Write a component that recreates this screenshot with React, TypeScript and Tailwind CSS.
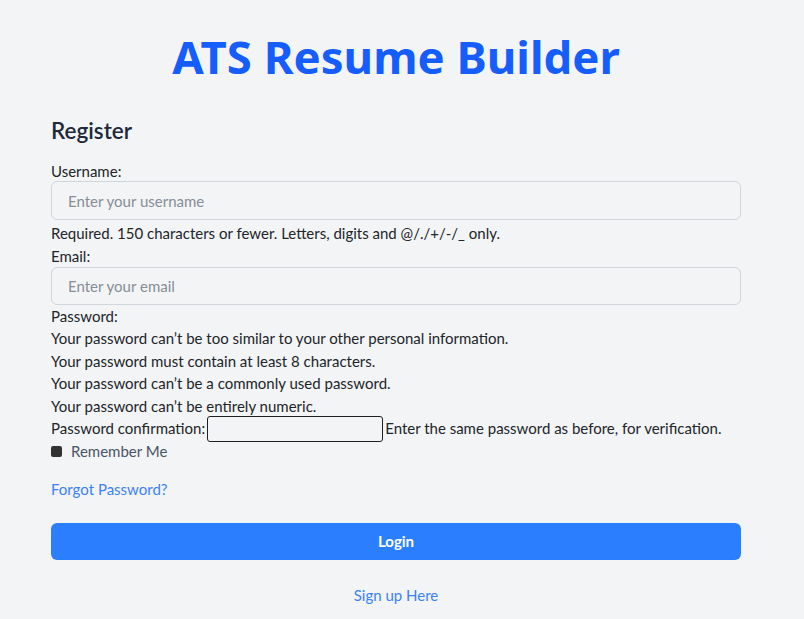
import React from "react";

export default function App() {
  return (
    <div
      className="min-h-screen bg-[#f3f4f6] text-[#212529]"
      style={{ fontFamily: 'Lato, "Noto Sans", sans-serif' }}
    >
      <div className="pl-[51px] pr-[63px] pt-[26px]">
        <h1
          className="text-center text-[45.5px] leading-[60px] font-bold text-[#155dfc]"
          style={{ fontFamily: '"Noto Sans", sans-serif' }}
        >
          ATS Resume Builder
        </h1>
        <h2 className="mt-[30px] text-[22.5px] leading-[30px] font-semibold text-[#1e2939]">
          Register
        </h2>
        <form className="mt-[14px] text-[15px] leading-[22.5px]" onSubmit={(e) => e.preventDefault()}>
          <div>
            <label className="block">Username:</label>
            <input
              type="text"
              placeholder="Enter your username"
              className="mt-[-1.5px] block w-full h-[39px] rounded-md border border-[#d1d5dc] bg-transparent px-4 text-[15px] placeholder:text-[#868e96] outline-none"
            />
            <div className="mt-[2px]">Required. 150 characters or fewer. Letters, digits and @/./+/-/_ only.</div>
          </div>
          <div>
            <label className="block">Email:</label>
            <input
              type="email"
              placeholder="Enter your email"
              className="mt-[-0.5px] block w-full h-[38px] rounded-md border border-[#d1d5dc] bg-transparent px-4 text-[15px] placeholder:text-[#868e96] outline-none"
            />
          </div>
          <div>
            <label className="block">Password:</label>
            <div>Your password can’t be too similar to your other personal information.</div>
            <div>Your password must contain at least 8 characters.</div>
            <div>Your password can’t be a commonly used password.</div>
            <div>Your password can’t be entirely numeric.</div>
          </div>
          <div className="flex h-[23px] items-center whitespace-nowrap">
            <span>Password confirmation:</span>
            <input
              type="password"
              className="mx-[2px] h-[26px] w-[176px] shrink-0 rounded-[3px] border border-[#1f1f1f] bg-transparent outline-none"
            />
            <span>Enter the same password as before, for verification.</span>
          </div>
          <div className="flex items-center gap-[9px] text-[#4a5565]">
            <span className="inline-block h-[11px] w-[11px] rounded-[2px] bg-[#333333]" />
            <span>Remember Me</span>
          </div>
          <div className="mt-[15px]">
            <a href="#" className="text-[#3b82f6]">Forgot Password?</a>
          </div>
          <button
            type="submit"
            className="mt-[23px] block w-full h-[37px] rounded-md bg-[#2b7fff] text-[15px] font-bold text-white"
          >
            Login
          </button>
          <div className="mt-[24px] text-center">
            <a href="#" className="text-[#3b82f6]">Sign up Here</a>
          </div>
        </form>
      </div>
    </div>
  );
}
